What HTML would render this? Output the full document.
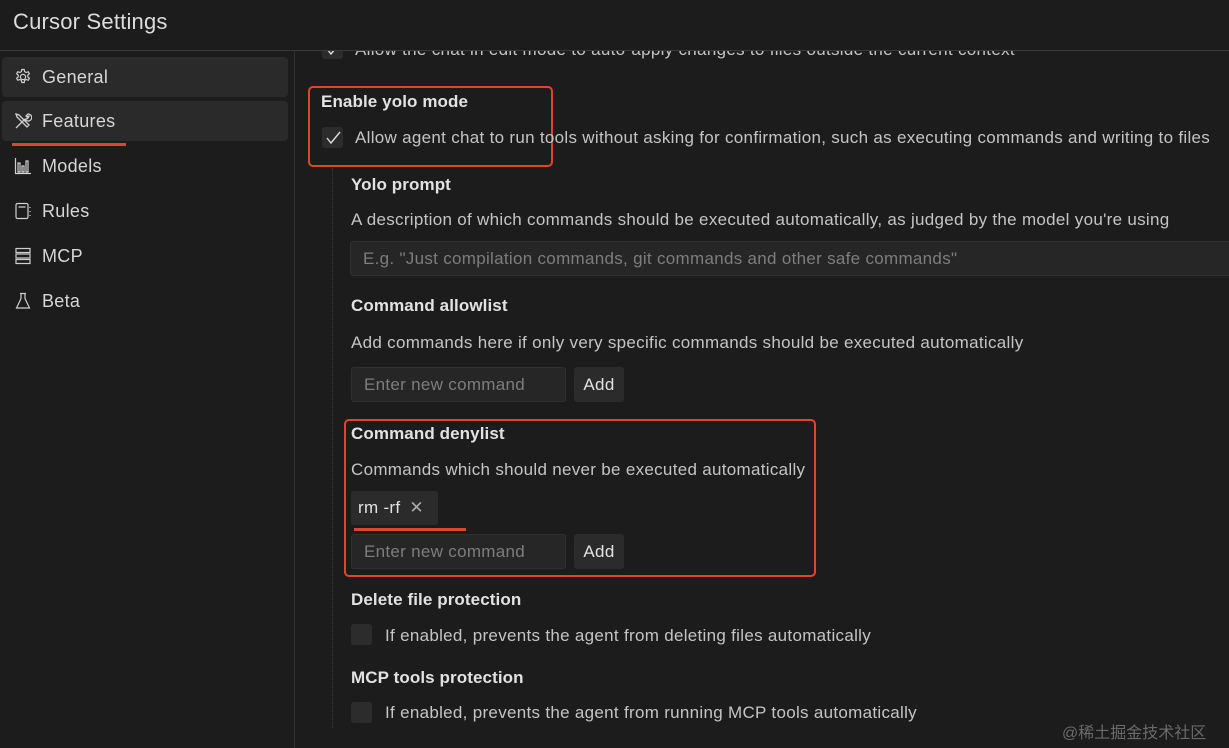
<!DOCTYPE html>
<html><head><meta charset="utf-8"><style>
*{margin:0;padding:0;box-sizing:border-box}
body{width:1229px;height:748px;background:#1c1c1c;color:#d6d6d6;font-family:"Liberation Sans","Noto Sans CJK SC",sans-serif;font-size:17px;letter-spacing:0.3px;position:relative;overflow:hidden}
.a{position:absolute;white-space:nowrap}
.b{font-weight:bold;color:#e2e2e2;letter-spacing:0.1px}
.d{color:#c4c4c4}
.cb{position:absolute;width:21px;height:21px;background:#2c2c2c;border-radius:3px}
.in{position:absolute;background:#262626;border:1px solid #303030;border-radius:3px;color:#7d7d7d;padding-left:12px;display:flex;align-items:center}
.btn{position:absolute;background:#2b2b2b;border-radius:3px;color:#e2e2e2;display:flex;align-items:center;justify-content:center}
.red{position:absolute;border:2px solid #e0452c;border-radius:5px}
.nav{position:absolute;left:2px;width:286px;height:40px;border-radius:4px}
.ic{position:absolute;left:14px}
.n{position:absolute;left:42px;font-size:18px;letter-spacing:0.3px}
</style></head><body>
<div class="cb" style="left:322px;top:38px"></div>
<svg class="a" style="left:323px;top:39px" width="20" height="20" viewBox="0 0 20 20"><path d="M4 10l4 5 9-11" fill="none" stroke="#ddd" stroke-width="1.4"/></svg>
<div class="a d" style="left:355px;top:40px">Allow the chat in edit mode to auto-apply changes to files outside the current context</div>
<div class="a" style="left:0;top:0;width:1229px;height:50px;background:#1c1c1c"></div>
<div class="a" style="left:13px;top:9px;font-size:22px;color:#dcdcdc;letter-spacing:0.2px">Cursor Settings</div>
<div class="a" style="left:0;top:50px;width:1229px;height:1px;background:#3a3a3a"></div>
<div class="a" style="left:294px;top:51px;width:1px;height:697px;background:#333"></div>

<div class="nav" style="top:57px;background:#2a2a2a"></div>
<div class="nav" style="top:101px;background:#2a2a2a"></div>
<div class="a" style="left:12px;top:143px;width:114px;height:3px;background:#e0452c"></div>
<svg class="ic" style="top:68px" width="18" height="18" viewBox="0 0 18 18" fill="none" stroke="#cfcfcf" stroke-width="1.2"><circle cx="9" cy="9" r="2.6"/><path d="M7.8 1.5h2.4l.4 2.1 1.6.9 2-.8 1.2 2-1.6 1.4v1.8l1.6 1.4-1.2 2-2-.8-1.6.9-.4 2.1H7.8l-.4-2.1-1.6-.9-2 .8-1.2-2 1.6-1.4V7.1L2.6 5.7l1.2-2 2 .8 1.6-.9z"/></svg>
<div class="n" style="top:67px">General</div>
<svg class="ic" style="top:112px" width="18" height="18" viewBox="0 0 18 18" fill="none" stroke="#cfcfcf" stroke-width="1.3"><path d="M2 16L11 7M11 7a3.5 3.5 0 1 0 3-5l-2 2 1 1 2-1a3.5 3.5 0 0 1-4 3M2 2l3 1 10 10-2 2L3 5z"/></svg>
<div class="n" style="top:111px">Features</div>
<svg class="ic" style="top:157px" width="18" height="18" viewBox="0 0 18 18" fill="none" stroke="#cfcfcf" stroke-width="1.2"><path d="M1.5 1v15.5H17M4 6h2v9H4zM8 9h2v6H8zM12 4h2v11h-2z"/></svg>
<div class="n" style="top:156px">Models</div>
<svg class="ic" style="top:202px" width="18" height="18" viewBox="0 0 18 18" fill="none" stroke="#cfcfcf" stroke-width="1.2"><rect x="2" y="1.5" width="12" height="15" rx="1.5"/><path d="M4.5 5h7M16 5v1M16 9v1M16 13v1"/></svg>
<div class="n" style="top:201px">Rules</div>
<svg class="ic" style="top:247px" width="18" height="18" viewBox="0 0 18 18" fill="none" stroke="#cfcfcf" stroke-width="1.2"><rect x="2" y="1.5" width="14" height="4"/><rect x="2" y="7" width="14" height="4"/><rect x="2" y="12.5" width="14" height="4"/></svg>
<div class="n" style="top:246px">MCP</div>
<svg class="ic" style="top:292px" width="18" height="18" viewBox="0 0 18 18" fill="none" stroke="#cfcfcf" stroke-width="1.2"><path d="M6 1.5h6M7 1.5v5L2.5 16h13L11 6.5v-5"/></svg>
<div class="n" style="top:291px">Beta</div>

<div class="red" style="left:308px;top:86px;width:245px;height:81px"></div>
<div class="a b" style="left:321px;top:92px">Enable yolo mode</div>
<div class="cb" style="left:322px;top:127px"></div>
<svg class="a" style="left:323px;top:128px" width="20" height="20" viewBox="0 0 20 20"><path d="M4 10l4 5 9-11" fill="none" stroke="#ddd" stroke-width="1.4"/></svg>
<div class="a d" style="left:355px;top:128px">Allow agent chat to run tools without asking for confirmation, such as executing commands and writing to files</div>

<div class="a" style="left:332px;top:168px;height:560px;border-left:1px dotted #3a3a3a"></div>

<div class="a b" style="left:351px;top:175px">Yolo prompt</div>
<div class="a d" style="left:351px;top:210px">A description of which commands should be executed automatically, as judged by the model you're using</div>
<div class="in" style="left:350px;top:241px;width:890px;height:35px">E.g. "Just compilation commands, git commands and other safe commands"</div>

<div class="a b" style="left:351px;top:296px">Command allowlist</div>
<div class="a d" style="left:351px;top:333px">Add commands here if only very specific commands should be executed automatically</div>
<div class="in" style="left:351px;top:367px;width:215px;height:35px">Enter new command</div>
<div class="btn" style="left:574px;top:367px;width:50px;height:35px">Add</div>

<div class="red" style="left:344px;top:419px;width:472px;height:158px"></div>
<div class="a b" style="left:351px;top:424px">Command denylist</div>
<div class="a d" style="left:351px;top:460px">Commands which should never be executed automatically</div>
<div class="btn" style="left:351px;top:491px;width:87px;height:34px;justify-content:flex-start;padding-left:7px">rm -rf<span style="margin-left:9px;color:#aaa">✕</span></div>
<div class="a" style="left:354px;top:528px;width:112px;height:3px;background:#e0452c"></div>
<div class="in" style="left:351px;top:534px;width:215px;height:35px">Enter new command</div>
<div class="btn" style="left:574px;top:534px;width:50px;height:35px">Add</div>

<div class="a b" style="left:351px;top:590px">Delete file protection</div>
<div class="cb" style="left:351px;top:624px"></div>
<div class="a d" style="left:385px;top:626px">If enabled, prevents the agent from deleting files automatically</div>
<div class="a b" style="left:351px;top:668px">MCP tools protection</div>
<div class="cb" style="left:351px;top:702px"></div>
<div class="a d" style="left:385px;top:703px">If enabled, prevents the agent from running MCP tools automatically</div>

<div class="a" style="left:1062px;top:719px;font-size:16px;letter-spacing:0;color:#6a6a6a">@稀土掘金技术社区</div>
</body></html>
